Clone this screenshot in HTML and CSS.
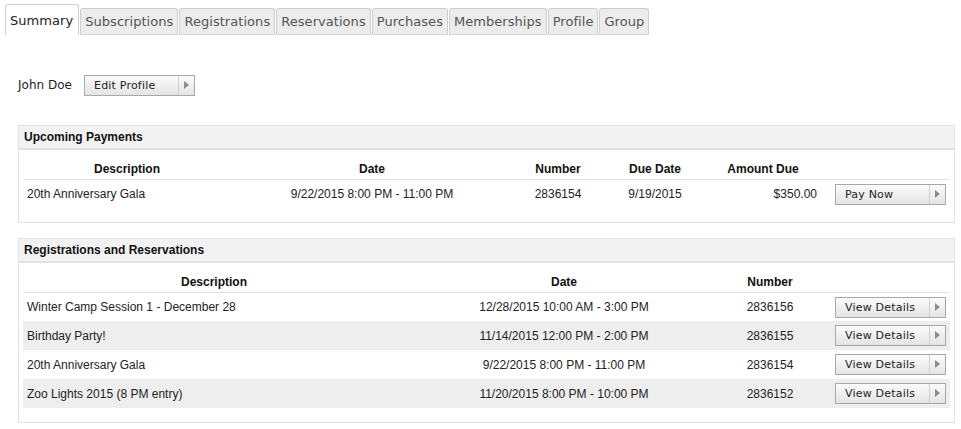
FILE: index.html
```html
<!DOCTYPE html>
<html>
<head>
<meta charset="utf-8">
<link rel="stylesheet" href="styles.css">
</head>
<body>
<div class="tabs">
  <div class="tab active">Summary</div>
  <div class="tab">Subscriptions</div>
  <div class="tab">Registrations</div>
  <div class="tab">Reservations</div>
  <div class="tab">Purchases</div>
  <div class="tab">Memberships</div>
  <div class="tab">Profile</div>
  <div class="tab">Group</div>
</div>

<div class="content">
  <div class="user">
    <span class="name">John Doe</span>
    <span class="btn btn-edit"><span class="btn-label">Edit Profile</span><span class="btn-arrow"></span></span>
  </div>

  <div class="panel">
    <div class="panel-head">Upcoming Payments</div>
    <table class="grid">
      <colgroup>
        <col style="width:208px"><col style="width:282px"><col style="width:90px"><col style="width:104px"><col style="width:112px"><col>
      </colgroup>
      <thead>
        <tr><th>Description</th><th>Date</th><th>Number</th><th>Due Date</th><th>Amount Due</th><th></th></tr>
      </thead>
      <tbody>
        <tr>
          <td class="left">20th Anniversary Gala</td>
          <td>9/22/2015 8:00 PM - 11:00 PM</td>
          <td>2836154</td>
          <td>9/19/2015</td>
          <td class="right">$350.00</td>
          <td class="act"><span class="btn"><span class="btn-label">Pay Now</span><span class="btn-arrow"></span></span></td>
        </tr>
      </tbody>
    </table>
  </div>

  <div class="panel panel2">
    <div class="panel-head">Registrations and Reservations</div>
    <table class="grid">
      <colgroup>
        <col style="width:382px"><col style="width:318px"><col style="width:94px"><col>
      </colgroup>
      <thead>
        <tr><th>Description</th><th>Date</th><th>Number</th><th></th></tr>
      </thead>
      <tbody>
        <tr class="first">
          <td class="left">Winter Camp Session 1 - December 28</td>
          <td>12/28/2015 10:00 AM - 3:00 PM</td>
          <td>2836156</td>
          <td class="act"><span class="btn"><span class="btn-label">View Details</span><span class="btn-arrow"></span></span></td>
        </tr>
        <tr class="alt">
          <td class="left">Birthday Party!</td>
          <td>11/14/2015 12:00 PM - 2:00 PM</td>
          <td>2836155</td>
          <td class="act"><span class="btn"><span class="btn-label">View Details</span><span class="btn-arrow"></span></span></td>
        </tr>
        <tr>
          <td class="left">20th Anniversary Gala</td>
          <td>9/22/2015 8:00 PM - 11:00 PM</td>
          <td>2836154</td>
          <td class="act"><span class="btn"><span class="btn-label">View Details</span><span class="btn-arrow"></span></span></td>
        </tr>
        <tr class="alt">
          <td class="left">Zoo Lights 2015 (8 PM entry)</td>
          <td>11/20/2015 8:00 PM - 10:00 PM</td>
          <td>2836152</td>
          <td class="act"><span class="btn"><span class="btn-label">View Details</span><span class="btn-arrow"></span></span></td>
        </tr>
      </tbody>
    </table>
  </div>
</div>
</body>
</html>
```

FILE: styles.css
```css
html, body {
  margin: 0;
  padding: 0;
  background: #fff;
}
body {
  font-family: "Liberation Sans", Arial, sans-serif;
  font-size: 12px;
  color: #222;
}
.tabs {
  display: flex;
  align-items: flex-end;
  padding: 4px 0 0 5px;
  height: 31px;
}
.tab {
  font-family: "DejaVu Sans", Verdana, sans-serif;
  font-size: 13px;
  color: #555;
  background: #ececec;
  border: 1px solid #cfcfcf;
  border-bottom: 1px solid #d6d6d6;
  border-radius: 3px 3px 0 0;
  height: 27px;
  line-height: 26px;
  padding: 0 4px;
  margin-right: 1px;
  box-sizing: border-box;
  letter-spacing: 0.05px;
}
.tab.active {
  background: #fff;
  color: #222;
  height: 31px;
  line-height: 31px;
  border-bottom: none;
  padding: 0 5px 0 4px;
}
.content {
  padding: 0 6px 0 18px;
}
.user {
  display: flex;
  align-items: center;
  height: 22px;
  margin-top: 39px;
}
.name {
  font-family: "DejaVu Sans", Verdana, sans-serif;
  font-size: 12px;
  width: 66px;
  color: #222;
}
.btn {
  display: inline-flex;
  height: 21px;
  box-sizing: border-box;
  border: 1px solid #a8a8a8;
  background: linear-gradient(#fbfbfb, #e4e4e4);
  font-family: "DejaVu Sans", Verdana, sans-serif;
  font-size: 11px;
  color: #222;
  vertical-align: middle;
}
.btn-label {
  flex: 1;
  padding-left: 9px;
  line-height: 19px;
  text-align: left;
  letter-spacing: 0.2px;
}
.btn-arrow {
  width: 15px;
  border-left: 1px solid #cfcfcf;
  position: relative;
}
.btn-arrow::after {
  content: "";
  position: absolute;
  left: 5px;
  top: 5px;
  border-left: 5px solid #8c8c8c;
  border-top: 4px solid transparent;
  border-bottom: 4px solid transparent;
}
.btn-edit {
  width: 111px;
}
.panel {
  margin-top: 29px;
  border: 1px solid #e2e2e2;
  padding: 0 4px 14px 4px;
  width: 937px;
  box-sizing: border-box;
}
.panel2 {
  margin-top: 15px;
}
.panel-head {
  margin: 0 -4px;
  background: #f2f2f2;
  border-bottom: 2px solid #e2e2e2;
  height: 22px;
  line-height: 22px;
  padding-left: 5px;
  font-weight: bold;
  color: #111;
}
.grid {
  width: 100%;
  border-collapse: collapse;
  table-layout: fixed;
  margin-top: 9px;
}
.grid th {
  font-weight: bold;
  height: 20px;
  padding: 0;
  text-align: center;
  vertical-align: middle;
  border-bottom: 1px solid #e2e2e2;
  color: #111;
}
.grid td {
  height: 28px;
  padding: 0 4px;
  text-align: center;
  vertical-align: middle;
  color: #222;
}
.grid td.left { text-align: left; }
.grid td.right { text-align: right; padding-right: 2px; }
.grid td.act { text-align: right; padding-right: 4px; }
.grid tr.alt td { background: #eeeeee; }
.grid .btn { width: 111px; }
.panel2 .grid td { height: 29px; }
.panel2 .grid tr.first td { height: 28px; }
```
